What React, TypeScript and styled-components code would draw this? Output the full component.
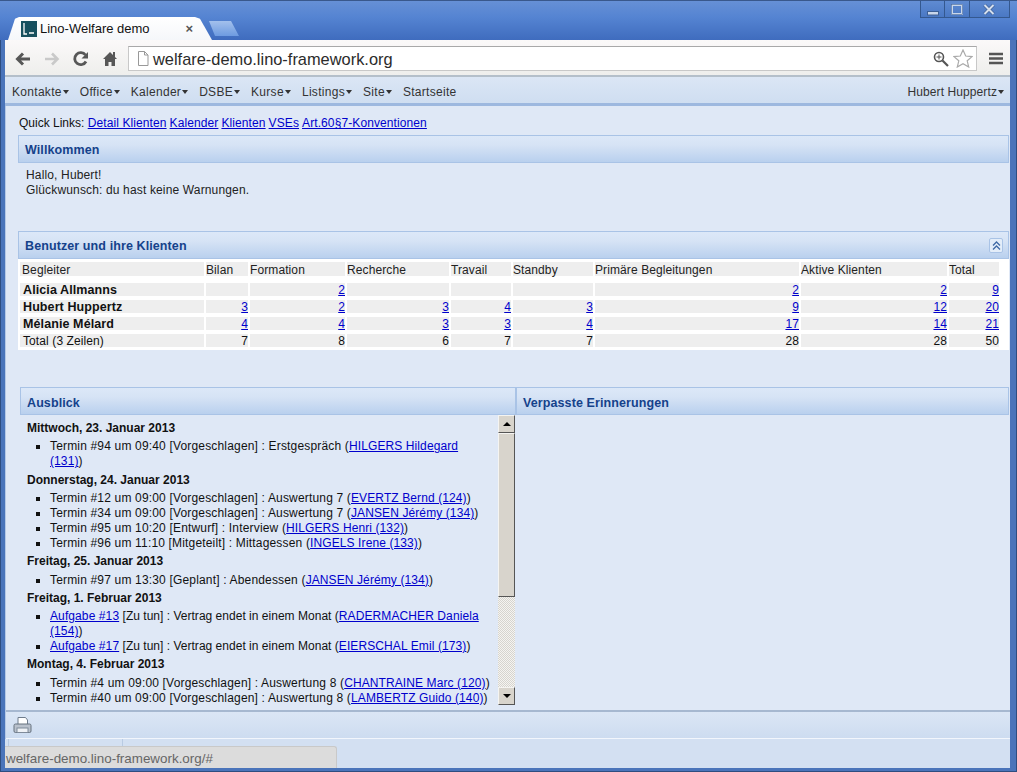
import React from 'react';
import styled, { createGlobalStyle } from 'styled-components';

const GlobalStyle = createGlobalStyle`
  html, body {
    margin: 0;
    padding: 0;
    background: #3f64a6;
    overflow: hidden;
  }
  * {
    box-sizing: border-box;
  }
`;

const Window = styled.div`
  width: 1017px;
  height: 772px;
  display: flex;
  flex-direction: column;
  overflow: hidden;
  background: #4a74ba;
  box-shadow: inset 0 0 0 1px #2e4d80;
  font-family: 'Liberation Sans', Arial, sans-serif;
  font-size: 12px;
  letter-spacing: 0.1px;
  color: #222;
`;

const TitleBar = styled.div`
  height: 40px;
  flex: none;
  position: relative;
  display: flex;
  align-items: flex-end;
  padding-left: 8px;
  border-top: 1px solid #39588c;
  background: linear-gradient(#6690d6 0, #5584d2 16px, #3f6cbe 39px);
`;

const Tab = styled.div`
  width: 204px;
  height: 23px;
  display: flex;
  align-items: center;
  padding: 0 19px 0 13px;
  gap: 3px;
  background: linear-gradient(#fff, #f5f7fa);
  clip-path: polygon(0 100%, 7px 8%, 11px 0, 187px 0, 192px 8%, 204px 100%);
  font-size: 13px;
  letter-spacing: 0;
  color: #111;
`;

const TabTitle = styled.span`
  flex: 1;
  white-space: nowrap;
`;

const TabClose = styled.span`
  font-size: 13px;
  font-weight: bold;
  color: #555;
`;

const NewTab = styled.div`
  width: 30px;
  height: 15px;
  margin: 0 0 4px -3px;
  background: linear-gradient(#a3c0ec, #6d9be0);
  clip-path: polygon(0 0, 22px 0, 30px 100%, 6px 100%);
`;

const WindowControls = styled.div`
  position: absolute;
  top: 0;
  left: 920px;
  width: 90px;
  height: 17px;
  display: flex;
  background: linear-gradient(#5f8bd2, #4a78c4);
  border: 1px solid #34588f;
  border-top: none;
`;

const WindowButton = styled.div<{ $w: number }>`
  width: ${(p) => p.$w}px;
  display: flex;
  align-items: center;
  justify-content: center;
  border-right: 1px solid #34588f;
  &:last-child {
    border-right: none;
  }
`;

const Toolbar = styled.div`
  height: 37px;
  flex: none;
  display: flex;
  align-items: center;
  margin: 0 7px 0 5px;
  padding: 2px 0 0 10px;
  background: linear-gradient(#fbf9f9, #eeeeec);
  border-bottom: 2px solid #b4bfca;
`;

const ToolIcon = styled.svg<{ $mr: number }>`
  flex: none;
  margin-right: ${(p) => p.$mr}px;
`;

const Omnibox = styled.div`
  width: 849px;
  height: 25px;
  flex: none;
  display: flex;
  align-items: center;
  padding: 0 3px 0 8px;
  background: #fff;
  border: 1px solid #c8c8c8;
  border-top-color: #a9a9a9;
  font-size: 16.4px;
  letter-spacing: 0;
  color: #2b2b2b;
`;

const Url = styled.span`
  flex: 1;
  margin-left: 4px;
  padding-top: 2px;
`;

const MenuBar = styled.div`
  height: 29px;
  flex: none;
  display: flex;
  align-items: center;
  margin: 0 7px 0 5px;
  padding: 4px 6px 0 7px;
  gap: 11px;
  background: linear-gradient(#dbe6f5, #cfdef1);
  border-bottom: 3px solid #9db8df;
  letter-spacing: 0.3px;
  color: #333;
`;

const MenuItem = styled.span<{ $right?: boolean }>`
  display: inline-flex;
  align-items: center;
  white-space: nowrap;
  margin-left: ${(p) => (p.$right ? 'auto' : '0')};
  letter-spacing: ${(p) => (p.$right ? '0.1px' : 'inherit')};
  &::after {
    content: '';
    margin-left: 1px;
    border: 3px solid transparent;
    border-top: 4px solid #333;
    border-bottom: none;
  }
`;

const PlainItem = styled.span`
  white-space: nowrap;
`;

const Main = styled.div`
  flex: none;
  display: flex;
  flex-direction: column;
  margin: 0 7px 0 5px;
  padding: 8px 1px 0 12px;
  background: #dfe8f6;
  border-left: 1px solid #b5c9e6;
`;

const QuickLinks = styled.div`
  height: 21px;
  flex: none;
  padding: 1px 0 0 1px;
  line-height: 17px;
  letter-spacing: 0;
  color: #111;
  a {
    margin-right: 3px;
    letter-spacing: 0.1px;
  }
`;

const Link = styled.a`
  color: #0000cc;
  text-decoration: underline;
`;

const PanelHeader = styled.div`
  height: 28px;
  flex: none;
  display: flex;
  align-items: center;
  justify-content: space-between;
  padding: 0 5px 0 6px;
  background: linear-gradient(#dce8f8, #d6e3f5 35%, #b9d0ee);
  border: 1px solid #a9c3e6;
  font-size: 12.5px;
  font-weight: bold;
  color: #15428b;
`;

const PanelTitle = styled.span<{ $drop?: boolean }>`
  margin-top: ${(p) => (p.$drop ? 4 : 2)}px;
`;

const CollapseTool = styled.div`
  width: 14px;
  height: 15px;
  display: flex;
  align-items: center;
  justify-content: center;
  background: #e3edf9;
  border: 1px solid #a9c3e6;
  border-radius: 2px;
`;

const WelcomeBody = styled.div`
  height: 68px;
  flex: none;
  padding: 5px 8px;
  line-height: 15px;
  letter-spacing: 0.15px;
`;

const TableWrap = styled.div`
  height: 91px;
  flex: none;
  background: #fff;
`;

const UserTable = styled.table`
  table-layout: fixed;
  border-collapse: separate;
  border-spacing: 2px 0;
  font-size: 12px;
`;

const Th = styled.th`
  height: 22px;
  padding: 2px 0 0;
  font-weight: normal;
  text-align: left;
  background: #eeeeee;
  background-clip: padding-box;
  border-top: 3px solid #fff;
  border-bottom: 5px solid #fff;
  line-height: 12px;
  color: #222;
  &:first-child {
    padding-left: 2px;
  }
`;

const Td = styled.td<{ $name?: boolean }>`
  height: 17px;
  padding: 1px 0 0;
  background: #eeeeee;
  background-clip: padding-box;
  border-top: 2px solid #fff;
  border-bottom: 2px solid #fff;
  text-align: ${(p) => (p.$name ? 'left' : 'right')};
  line-height: 12px;
  color: #111;
`;

const BoldCell = styled(Td)`
  padding-left: 3px;
  font-size: 12.5px;
  font-weight: bold;
  color: #111;
`;

const TotalName = styled(Td)`
  padding-left: 3px;
`;

const Split = styled.div`
  display: flex;
  flex: none;
  margin: 37px 0 0 2px;
`;

const LeftPane = styled.div`
  width: 496px;
  flex: none;
`;

const RightPane = styled.div`
  flex: 1;
`;

const ScrollBody = styled.div`
  height: 290px;
  display: flex;
  padding-right: 1px;
`;

const Agenda = styled.div`
  flex: 1;
  overflow: hidden;
  padding: 6px 6px 0 7px;
`;

const DayTitle = styled.div`
  height: 15px;
  line-height: 15px;
  font-weight: bold;
  letter-spacing: 0;
  color: #111;
`;

const DayList = styled.ul`
  margin: 3.4px 0 3.2px;
  padding: 0 0 0 23px;
  list-style: square;
  line-height: 15px;
  color: #111;
`;

const DayEntry = styled.li<{ $task?: boolean }>`
  letter-spacing: ${(p) => (p.$task ? '0.02px' : '0.17px')};
  a {
    letter-spacing: 0.1px;
  }
`;

const ScrollBar = styled.div`
  width: 17px;
  flex: none;
  display: flex;
  flex-direction: column;
  background: repeating-conic-gradient(#d6d4ce 0 25%, #f5f4f1 0 50%) 0 0 / 2px 2px;
`;

const ScrollButton = styled.div<{ $down?: boolean }>`
  height: 18px;
  display: flex;
  align-items: center;
  justify-content: center;
  background: #d8d4cc;
  border: 1px solid;
  border-color: #f5f4f1 #555 #555 #f5f4f1;
  &::after {
    content: '';
    border: 4px solid transparent;
    border-top: none;
    border-bottom: 4px solid #000;
    transform: ${(p) => (p.$down ? 'rotate(180deg)' : 'none')};
  }
`;

const ScrollThumb = styled.div`
  height: 164px;
  background: #d8d4cc;
  border: 1px solid;
  border-color: #f5f4f1 #555 #555 #f5f4f1;
`;

const ScrollTrack = styled.div`
  flex: 1;
`;

const FooterBar = styled.div`
  height: 29px;
  flex: none;
  display: flex;
  align-items: center;
  margin: 5px -1px 0 -12px;
  padding: 0 0 0 7px;
  background: linear-gradient(#dbe6f5, #cddcf0);
  border-top: 2px solid #a6b8d0;
  border-bottom: 1px solid #f2f6fc;
`;

const BottomBar = styled.div`
  flex: 1;
  position: relative;
  display: flex;
  margin: 0 7px 4px 5px;
  padding-left: 3px;
  background: #d3e0f2;
`;

const BottomCell = styled.div`
  width: 115px;
  border-left: 1px solid #b9cbe3;
  border-right: 1px solid #b9cbe3;
`;

const StatusBubble = styled.div`
  position: absolute;
  left: 0;
  bottom: 0;
  width: 332px;
  height: 22px;
  display: flex;
  align-items: center;
  padding: 1px 0 0 1px;
  background: #dcdcdc;
  border-top: 1px solid #c9c9c9;
  border-right: 1px solid #c9c9c9;
  border-top-right-radius: 3px;
  font-size: 13.4px;
  letter-spacing: 0;
  color: #666;
`;

interface IRow {
  name: string;
  cells: (number | null)[];
}

const columns = [
  { title: 'Begleiter', width: 184 },
  { title: 'Bilan', width: 42 },
  { title: 'Formation', width: 95 },
  { title: 'Recherche', width: 102 },
  { title: 'Travail', width: 60 },
  { title: 'Standby', width: 80 },
  { title: 'Primäre Begleitungen', width: 204 },
  { title: 'Aktive Klienten', width: 146 },
  { title: 'Total', width: 50 },
];

const rows: IRow[] = [
  { name: 'Alicia Allmanns', cells: [null, 2, null, null, null, 2, 2, 9] },
  { name: 'Hubert Huppertz', cells: [3, 2, 3, 4, 3, 9, 12, 20] },
  { name: 'Mélanie Mélard', cells: [4, 4, 3, 3, 4, 17, 14, 21] },
];

const totals = [7, 8, 6, 7, 7, 28, 28, 50];

const menus = ['Kontakte', 'Office', 'Kalender', 'DSBE', 'Kurse', 'Listings', 'Site'];

const quickLinks = ['Detail Klienten', 'Kalender', 'Klienten', 'VSEs', 'Art.60§7-Konventionen'];

interface IEntry {
  lead?: string;
  text: string;
  client: string;
}

const agenda: { day: string; entries: IEntry[] }[] = [
  {
    day: 'Mittwoch, 23. Januar 2013',
    entries: [{ text: 'Termin #94 um 09:40 [Vorgeschlagen] : Erstgespräch', client: 'HILGERS Hildegard (131)' }],
  },
  {
    day: 'Donnerstag, 24. Januar 2013',
    entries: [
      { text: 'Termin #12 um 09:00 [Vorgeschlagen] : Auswertung 7', client: 'EVERTZ Bernd (124)' },
      { text: 'Termin #34 um 09:00 [Vorgeschlagen] : Auswertung 7', client: 'JANSEN Jérémy (134)' },
      { text: 'Termin #95 um 10:20 [Entwurf] : Interview', client: 'HILGERS Henri (132)' },
      { text: 'Termin #96 um 11:10 [Mitgeteilt] : Mittagessen', client: 'INGELS Irene (133)' },
    ],
  },
  {
    day: 'Freitag, 25. Januar 2013',
    entries: [{ text: 'Termin #97 um 13:30 [Geplant] : Abendessen', client: 'JANSEN Jérémy (134)' }],
  },
  {
    day: 'Freitag, 1. Februar 2013',
    entries: [
      { lead: 'Aufgabe #13', text: ' [Zu tun] : Vertrag endet in einem Monat', client: 'RADERMACHER Daniela (154)' },
      { lead: 'Aufgabe #17', text: ' [Zu tun] : Vertrag endet in einem Monat', client: 'EIERSCHAL Emil (173)' },
    ],
  },
  {
    day: 'Montag, 4. Februar 2013',
    entries: [
      { text: 'Termin #4 um 09:00 [Vorgeschlagen] : Auswertung 8', client: 'CHANTRAINE Marc (120)' },
      { text: 'Termin #40 um 09:00 [Vorgeschlagen] : Auswertung 8', client: 'LAMBERTZ Guido (140)' },
    ],
  },
];

const App = () => {
  return (
    <Window>
      <GlobalStyle />
      <TitleBar>
        <Tab>
          <svg width="16" height="16" viewBox="0 0 16 16">
            <rect width="16" height="16" fill="#17505f" />
            <path d="M3 2v11h3M8 12h5" stroke="#fff" strokeWidth="1.3" fill="none" />
          </svg>
          <TabTitle>Lino-Welfare demo</TabTitle>
          <TabClose>×</TabClose>
        </Tab>
        <NewTab />
        <WindowControls>
          <WindowButton $w={25}>
            <svg width="12" height="5" viewBox="0 0 12 5" style={{ marginTop: 8 }}>
              <rect x="0.5" y="0.5" width="11" height="3.5" fill="#c9d6ea" stroke="#3c5f95" />
            </svg>
          </WindowButton>
          <WindowButton $w={25}>
            <svg width="12" height="11" viewBox="0 0 12 11">
              <rect x="1" y="1" width="10" height="9" fill="none" stroke="#c9d6ea" strokeWidth="2" />
              <rect x="0.5" y="0.5" width="11" height="10" fill="none" stroke="#3c5f95" strokeWidth="0.6" />
            </svg>
          </WindowButton>
          <WindowButton $w={40}>
            <svg width="12" height="11" viewBox="0 0 12 11">
              <path d="M1.5 1l9 9M10.5 1l-9 9" stroke="#3c5f95" strokeWidth="3.4" />
              <path d="M1.5 1l9 9M10.5 1l-9 9" stroke="#d5dfee" strokeWidth="2" />
            </svg>
          </WindowButton>
        </WindowControls>
      </TitleBar>

      <Toolbar>
        <ToolIcon $mr={13} width="16" height="14" viewBox="0 0 16 14">
          <path d="M15 7H4M8 1.5L2.5 7 8 12.5" stroke="#575757" strokeWidth="3" fill="none" />
        </ToolIcon>
        <ToolIcon $mr={13} width="16" height="14" viewBox="0 0 16 14">
          <path d="M1 7h11M8 1.5L13.5 7 8 12.5" stroke="#c9c9c9" strokeWidth="2.6" fill="none" />
        </ToolIcon>
        <ToolIcon $mr={14} width="16" height="16" viewBox="0 0 16 16">
          <path d="M13 10.5A6 6 0 1 1 12.5 4" stroke="#575757" strokeWidth="2.8" fill="none" />
          <path d="M15 1v6.5H8.5z" fill="#575757" />
        </ToolIcon>
        <ToolIcon $mr={11} width="14" height="15" viewBox="0 0 14 15">
          <path d="M7 1L0 8h2v7h3.5v-4h3v4H12V8h2l-2-2V1h-2v3z" fill="#575757" />
        </ToolIcon>
        <Omnibox>
          <svg width="12" height="15" viewBox="0 0 12 15">
            <path d="M1.5.5h6l3.5 3.5v10.500H1.500z" fill="#fff" stroke="#999" />
            <path d="M7.500.5V4H11" fill="none" stroke="#999" />
          </svg>
          <Url>welfare-demo.lino-framework.org</Url>
          <svg width="16" height="16" viewBox="0 0 16 16">
            <circle cx="6" cy="6" r="4.500" fill="#fff" stroke="#555" strokeWidth="1.6" />
            <path d="M9.500 9.500L15 15" stroke="#555" strokeWidth="2.200" />
            <path d="M3.500 6h5M6 3.500v5" stroke="#555" />
          </svg>
          <svg width="20" height="19" viewBox="0 0 20 19" style={{ marginLeft: 4 }}>
            <path
              d="M10 1l2.700 6 6.300.6-4.800 4.200 1.500 6.200L10 14.700 4.300 18l1.500-6.200L1 7.600 7.300 7z"
              fill="#fff"
              stroke="#aaa"
              strokeWidth="1.200"
            />
          </svg>
        </Omnibox>
        <ToolIcon $mr={0} style={{ marginLeft: 12 }} width="14" height="13" viewBox="0 0 14 13">
          <path d="M0 2h14M0 6.500h14M0 11h14" stroke="#555" strokeWidth="2.400" />
        </ToolIcon>
      </Toolbar>

      <MenuBar>
        {menus.map((menu) => (
          <MenuItem key={menu}>{menu}</MenuItem>
        ))}
        <PlainItem>Startseite</PlainItem>
        <MenuItem $right>Hubert Huppertz</MenuItem>
      </MenuBar>

      <Main>
        <QuickLinks>
          Quick Links:{' '}
          {quickLinks.map((link) => (
            <Link key={link} href="#">
              {link}
            </Link>
          ))}
        </QuickLinks>

        <PanelHeader>
          <PanelTitle>Willkommen</PanelTitle>
        </PanelHeader>
        <WelcomeBody>
          Hallo, Hubert!
          <br />
          Glückwunsch: du hast keine Warnungen.
        </WelcomeBody>

        <PanelHeader>
          <PanelTitle>Benutzer und ihre Klienten</PanelTitle>
          <CollapseTool>
            <svg width="9" height="9" viewBox="0 0 9 9">
              <path d="M1 4.500L4.500 1 8 4.500M1 8.500L4.500 5 8 8.500" stroke="#3f6aa5" strokeWidth="1.300" fill="none" />
            </svg>
          </CollapseTool>
        </PanelHeader>
        <TableWrap>
          <UserTable>
            <colgroup>
              {columns.map((col) => (
                <col key={col.title} style={{ width: col.width }} />
              ))}
            </colgroup>
            <thead>
              <tr>
                {columns.map((col) => (
                  <Th key={col.title}>{col.title}</Th>
                ))}
              </tr>
            </thead>
            <tbody>
              {rows.map((row) => (
                <tr key={row.name}>
                  <BoldCell $name>{row.name}</BoldCell>
                  {row.cells.map((cell, index) => (
                    <Td key={`${row.name}-${index}`}>{cell !== null && <Link href="#">{cell}</Link>}</Td>
                  ))}
                </tr>
              ))}
              <tr>
                <TotalName $name>Total (3 Zeilen)</TotalName>
                {totals.map((total, index) => (
                  <Td key={`total-${index}`}>{total}</Td>
                ))}
              </tr>
            </tbody>
          </UserTable>
        </TableWrap>

        <Split>
          <LeftPane>
            <PanelHeader>
              <PanelTitle $drop>Ausblick</PanelTitle>
            </PanelHeader>
            <ScrollBody>
              <Agenda>
                {agenda.map((group) => (
                  <React.Fragment key={group.day}>
                    <DayTitle>{group.day}</DayTitle>
                    <DayList>
                      {group.entries.map((entry) => (
                        <DayEntry key={entry.client} $task={!!entry.lead}>
                          {entry.lead && <Link href="#">{entry.lead}</Link>}
                          {entry.text} (<Link href="#">{entry.client}</Link>)
                        </DayEntry>
                      ))}
                    </DayList>
                  </React.Fragment>
                ))}
              </Agenda>
              <ScrollBar>
                <ScrollButton />
                <ScrollThumb />
                <ScrollTrack />
                <ScrollButton $down />
              </ScrollBar>
            </ScrollBody>
          </LeftPane>
          <RightPane>
            <PanelHeader>
              <PanelTitle $drop>Verpasste Erinnerungen</PanelTitle>
            </PanelHeader>
          </RightPane>
        </Split>

        <FooterBar>
          <svg width="19" height="18" viewBox="0 0 19 18">
            <path d="M5 8V1.500h7.500L14.500 4v4" fill="#fff" stroke="#6f7c8c" />
            <path d="M1 9.500Q1 8 2.500 8h14Q18 8 18 9.500V15Q18 16.500 16.500 16.500h-14Q1 16.500 1 15z" fill="#b9c1cc" stroke="#66727f" />
            <rect x="4" y="12" width="11" height="4.500" fill="#eef1f5" stroke="#7f8b9a" />
          </svg>
        </FooterBar>
      </Main>
      <BottomBar>
        <BottomCell />
        <StatusBubble>welfare-demo.lino-framework.org/#</StatusBubble>
      </BottomBar>
    </Window>
  );
};

export default App;
